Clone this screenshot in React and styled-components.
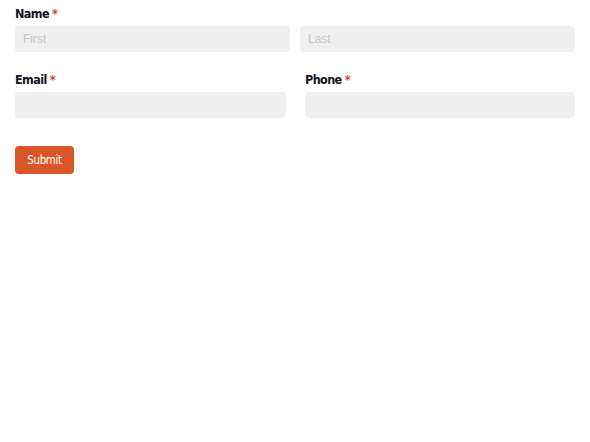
import React from "react";
import styled, { createGlobalStyle } from "styled-components";

const GlobalStyle = createGlobalStyle`
  html, body {
    margin: 0;
    padding: 0;
    background: #fff;
  }
  body {
    font-family: "DejaVu Sans Condensed", "Open Sans", sans-serif;
  }
`;

const Form = styled.form`
  display: flex;
  flex-direction: column;
  padding: 6px 15px 0 15px;
  width: 560px;
`;

const Field = styled.div`
  display: flex;
  flex-direction: column;
  margin-bottom: ${(p) => p.$mb || 0}px;
`;

const Label = styled.label`
  font-family: "DejaVu Sans Condensed", sans-serif;
  font-stretch: condensed;
  font-weight: bold;
  font-size: 12.5px;
  letter-spacing: -0.6px;
  color: #13111e;
  height: 16px;
  line-height: 16px;
  margin-bottom: 4px;

  span {
    color: #d63b2f;
    margin-left: 3px;
  }
`;

const Row = styled.div`
  display: grid;
  grid-template-columns: ${(p) => p.$cols};
  column-gap: ${(p) => p.$gap}px;
`;

const Input = styled.input`
  box-sizing: border-box;
  height: 26px;
  width: 100%;
  border: none;
  border-radius: 4px;
  background: #efefef;
  padding: 0 8px;
  font-family: "Liberation Sans", Arial, sans-serif;
  font-size: 12px;
  color: #333;
  outline: none;

  &::placeholder {
    color: #c4c4c4;
  }
`;

const Submit = styled.button`
  box-sizing: border-box;
  width: 59px;
  height: 28px;
  border: none;
  border-radius: 4px;
  background: #da5527;
  color: #fff;
  font-family: "DejaVu Sans Condensed", sans-serif;
  font-stretch: condensed;
  font-size: 11.5px;
  letter-spacing: -0.4px;
  cursor: pointer;
`;

const App = () => {
  return (
    <>
      <GlobalStyle />
      <Form onSubmit={(e) => e.preventDefault()}>
        <Field $mb={20}>
          <Label>
            Name<span>*</span>
          </Label>
          <Row $cols="275px 275px" $gap={10}>
            <Input placeholder="First" />
            <Input placeholder="Last" />
          </Row>
        </Field>
        <Row $cols="271px 270px" $gap={19}>
          <Field $mb={28}>
            <Label>
              Email<span>*</span>
            </Label>
            <Input type="email" />
          </Field>
          <Field $mb={28}>
            <Label>
              Phone<span>*</span>
            </Label>
            <Input type="tel" />
          </Field>
        </Row>
        <div>
          <Submit type="submit">Submit</Submit>
        </div>
      </Form>
    </>
  );
};

export default App;
